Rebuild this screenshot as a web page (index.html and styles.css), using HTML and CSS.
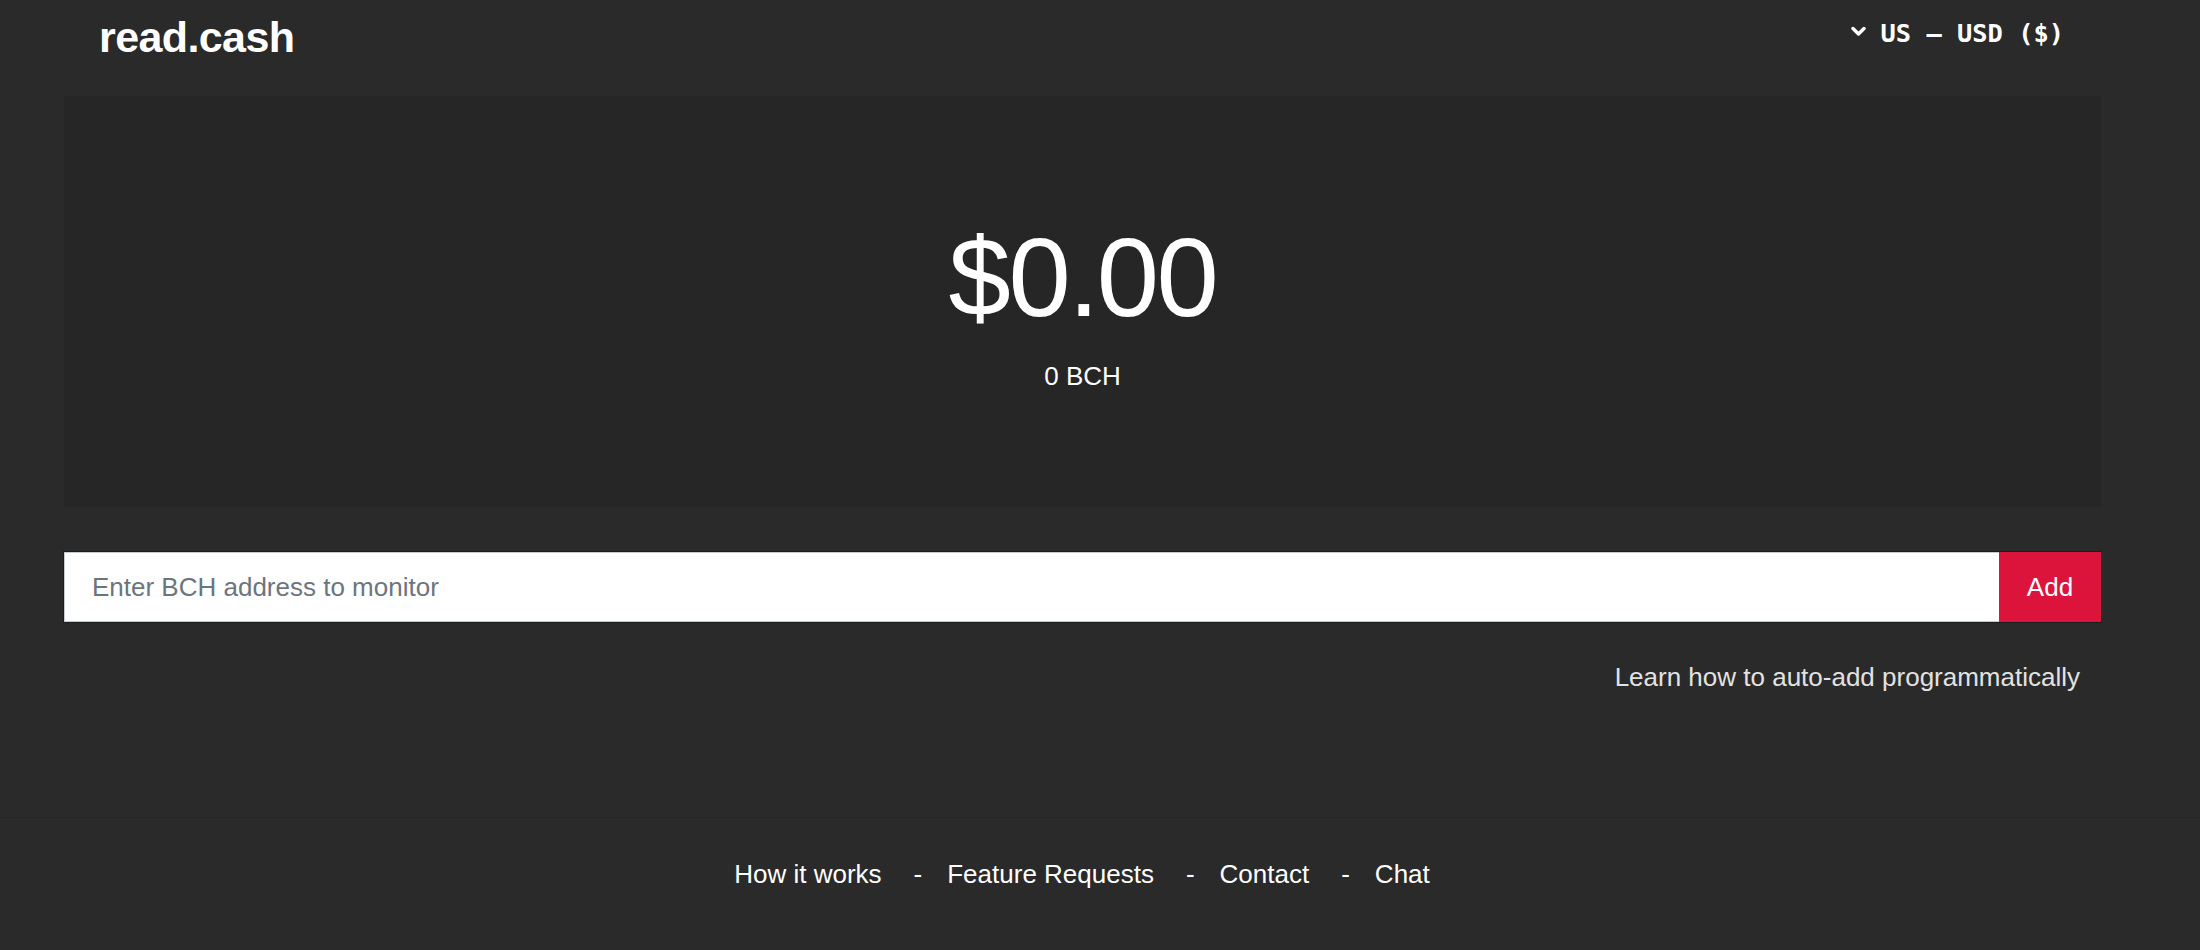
FILE: index.html
```html
<!DOCTYPE html>
<html lang="en">
<head>
  <meta charset="UTF-8">
  <meta name="viewport" content="width=device-width, initial-scale=1.0">
  <title>read.cash</title>
  <link rel="stylesheet" href="styles.css">
</head>
<body>
  <div class="container">
    <header class="top-bar">
      <a class="logo" href="#">read.cash</a>

      <div class="currency">
        <svg class="chevron" width="15" height="11" viewBox="0 0 15 11">
          <polyline points="2,2.5 7.5,8 13,2.5" fill="none" stroke="#fff" stroke-width="3.4" stroke-linecap="round" stroke-linejoin="round"/>
        </svg>
        <span>US &ndash; USD ($)</span>
      </div>
    </header>

    <!-- Total balance -->
    <section class="balance">
      <div class="amount">$0.00</div>
      <div class="amount-bch">0 BCH</div>
    </section>

    <form class="add-form" onsubmit="return false;">
      <input type="text" placeholder="Enter BCH address to monitor" />
      <button type="submit">Add</button>
    </form>

    <div class="learn">
      <a href="#">Learn how to auto-add programmatically</a>
    </div>
  </div>

  <footer class="footer">
    <a href="#">How it works</a>
    <span class="sep">-</span>
    <a href="#">Feature Requests</a>
    <span class="sep">-</span>
    <a href="#">Contact</a>
    <span class="sep">-</span>
    <a href="#">Chat</a>
  </footer>
</body>
</html>
```

FILE: styles.css
```css
/* Global Styles */
* {
  margin: 0;
  padding: 0;
  box-sizing: border-box;
}

html,
body {
  background: #2a2a2a;
}

body {
  min-height: 950px;
  font-family: 'Liberation Sans', Arial, Helvetica, sans-serif;
  color: #fff;
  overflow: hidden;
}

a {
  color: inherit;
  text-decoration: none;
}

.container {
  margin: 0 99px 0 64px;
}

/* Header */
.top-bar {
  height: 96px;
  display: flex;
  justify-content: space-between;
  align-items: flex-start;
  padding: 0 37px 0 35px;
}

.logo {
  margin-top: 16px;
  font-size: 43px;
  line-height: 1;
  font-weight: bold;
  letter-spacing: -0.6px;
  color: #fff;
}

.currency {
  margin-top: 21px;
  display: flex;
  align-items: center;
  gap: 15px;
  font-family: 'DejaVu Sans Mono', 'Liberation Mono', monospace;
  font-size: 25.4px;
  line-height: 1;
  font-weight: bold;
  color: #fff;
}

.chevron {
  margin-top: -4px;
}

/* Balance box */
.balance {
  background: #262626;
  height: 411px;
  padding-top: 126px;
  text-align: center;
}

.amount {
  font-size: 112px;
  line-height: 1;
  letter-spacing: -2.5px;
}

.amount-bch {
  margin-top: 29px;
  font-size: 26px;
  line-height: 1;
}

/* Address input */
.add-form {
  display: flex;
  margin-top: 45px;
  height: 70px;
  box-shadow: 0 0 0 1px #1c1c1c;
}

.add-form input {
  flex: 1;
  height: 70px;
  padding: 0 27px;
  font-family: inherit;
  font-size: 26px;
  color: #333;
  background: #fff;
  border: 1px solid #c5cbd1;
  border-right: none;
  outline: none;
}

.add-form input::placeholder {
  color: #6c757d;
}

.add-form button {
  width: 102px;
  height: 70px;
  background: #dc143c;
  color: #fff;
  border: none;
  font-family: inherit;
  font-size: 26px;
  cursor: pointer;
}

.learn {
  margin-top: 42px;
  padding-right: 21px;
  text-align: right;
  font-size: 26px;
  line-height: 1;
  color: #e2e2e2;
}

/* Footer */
.footer {
  margin-top: 127px;
  border-top: 1px solid #242424;
  padding: 43px 36px 0 0;
  display: flex;
  justify-content: center;
  font-size: 26px;
  line-height: 1;
  color: #fff;
}

.sep {
  margin: 0 25px 0 32px;
}
```
